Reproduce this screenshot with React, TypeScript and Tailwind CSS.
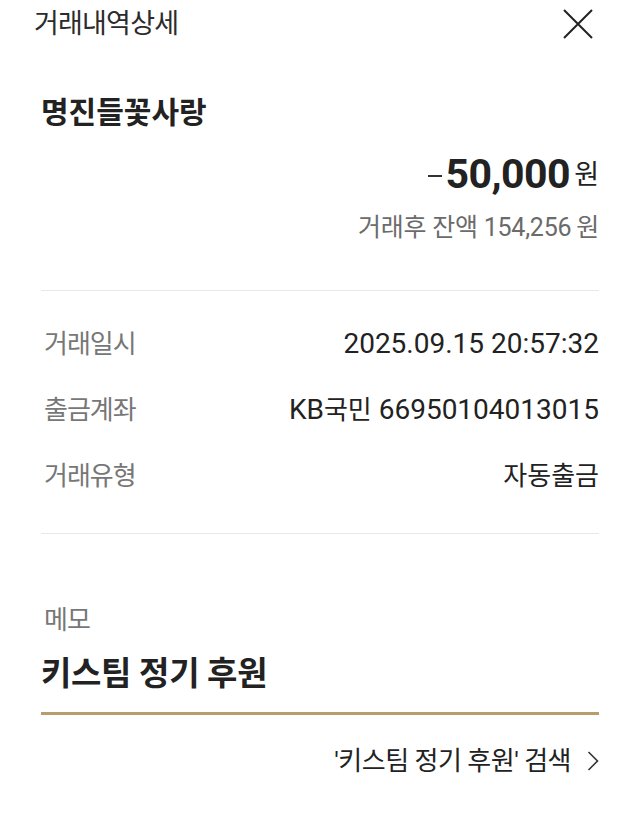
import React from "react";

const rows = [
  { label: "거래일시", value: <span>2025.09.15 20:57:32</span> },
  {
    label: "출금계좌",
    value: (
      <span>
        KB<span className="text-[26px]">국민</span> 66950104013015
      </span>
    ),
  },
  { label: "거래유형", value: <span className="text-[26px]">자동출금</span> },
];

export default function App() {
  return (
    <div className="min-h-[829px] w-[640px] bg-white font-['Roboto','Noto_Sans_CJK_KR',sans-serif] text-[#222]">
      {/* header */}
      <div className="flex h-[48px] items-center justify-between pl-[34px] pr-[47px]">
        <h1 className="text-[27px] font-normal tracking-[-0.8px] text-[#2b2b2b]">거래내역상세</h1>
        <svg width="30" height="30" viewBox="0 0 30 30" fill="none" stroke="#222" strokeWidth="2">
          <path d="M1 1 L29 29 M29 1 L1 29" />
        </svg>
      </div>

      <div className="px-[41px]">
        <div className="mt-[40px] flex h-[48px] items-center">
          <div className="text-[30px] font-bold">명진들꽃사랑</div>
        </div>

        <div className="mt-[15px] flex h-[48px] items-center justify-end">
          <span className="mr-[3px] mt-[2px] h-[2px] w-[14px] bg-[#333]" />
          <span className="text-[41px] font-bold tracking-[-0.5px]">50,000</span>
          <span className="ml-[4px] text-[27px] font-normal">원</span>
        </div>

        <div className="mt-[11px] flex h-[36px] items-center justify-end text-[25px] tracking-[-0.25px] text-[#6b6b6b]">
          <span>거래후 잔액 154,256</span>
          <span className="ml-[5px]">원</span>
        </div>

        <div className="mt-[44px] h-px bg-[#e8e8e8]" />

        <div className="mt-[20px]">
          {rows.map((r) => (
            <div key={r.label} className="flex h-[66px] items-center justify-between">
              <span className="pl-[3px] text-[26px] tracking-[-1px] text-[#777]">{r.label}</span>
              <span className="text-[28px] text-[#222]">{r.value}</span>
            </div>
          ))}
        </div>

        <div className="mt-[24px] h-px bg-[#e8e8e8]" />

        <div className="mt-[68px] flex h-[36px] items-center">
          <span className="pl-[3px] text-[26px] tracking-[-1px] text-[#777]">메모</span>
        </div>

        <div className="mt-[14px] flex h-[44px] items-center">
          <span className="text-[33px] font-bold tracking-[-0.3px]">키스팀 정기 후원</span>
        </div>

        <div className="mt-[16px] h-[3px] bg-[#b89c6c]" />

        <div className="mt-[26px] flex h-[40px] items-center justify-end">
          <span className="text-[26px] tracking-[-0.5px] text-[#222]">'키스팀 정기 후원' 검색</span>
          <svg className="ml-[16px]" width="12" height="20" viewBox="0 0 12 20" fill="none" stroke="#333" strokeWidth="1.6">
            <path d="M1.5 1 L10.5 10 L1.5 19" />
          </svg>
        </div>
      </div>
    </div>
  );
}
